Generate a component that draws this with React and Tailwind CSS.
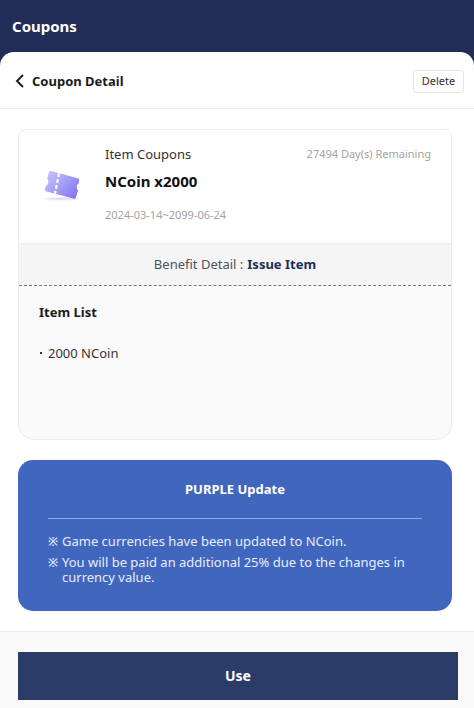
const notices = [
  'Game currencies have been updated to NCoin.',
  'You will be paid an additional 25% due to the changes in currency value.',
]

const items = ['2000 NCoin']

function TicketIcon() {
  return (
    <svg viewBox="0 0 40 34" className="h-[34px] w-10" fill="none" aria-hidden="true">
      <defs>
        <linearGradient id="ticket" x1="6" y1="4" x2="34" y2="30" gradientUnits="userSpaceOnUse">
          <stop stopColor="#c3c1fb" />
          <stop offset="0.5" stopColor="#a19df6" />
          <stop offset="1" stopColor="#8870ee" />
        </linearGradient>
        <radialGradient id="shade">
          <stop stopColor="#dcd9fb" />
          <stop offset="1" stopColor="#f1effe" />
        </radialGradient>
      </defs>
      <ellipse cx="19.500" cy="29.700" rx="18" ry="1.800" fill="url(#shade)" />
      <path
        d="M6.800 3.400Q7.300 1.600 9.200 2.100L35.600 9.200Q37.600 9.800 37.200 11.700L36.600 14.500C34.500 15.800 34 19 36 21.300L34 28.200Q33.400 30.200 31.200 29.600L4.600 22.600Q2.600 22 3 20.200L3.700 17.300C6.500 15.700 7.100 12 5.200 9.600Z"
        fill="url(#ticket)"
      />
      <path d="M17 4.400 13 24.800" stroke="#fff" strokeWidth="2.200" strokeDasharray="3.800 2.100" />
    </svg>
  )
}

function Header() {
  return (
    <header className="flex h-[52px] items-center px-3">
      <h1 className="text-[15px] font-bold text-white">Coupons</h1>
    </header>
  )
}

function DetailBar() {
  return (
    <div className="flex h-[57px] items-center justify-between border-b border-[#ececec] pt-0.5 pr-2.5 pl-3.5">
      <button type="button" className="flex items-center gap-1.5 pt-px text-[13px] font-bold text-[#1a1a1a]">
        <svg viewBox="0 0 12 14" className="-mt-0.5 h-3.5 w-3" fill="none" aria-hidden="true">
          <path d="M9 1 3 7l6 6" stroke="currentColor" strokeWidth="1.9" />
        </svg>
        Coupon Detail
      </button>
      <button
        type="button"
        className="h-[23px] w-[51px] rounded-[3px] border border-[#e5e5e5] pb-0.5 text-[11px] leading-[19px] text-[#333]"
      >
        Delete
      </button>
    </div>
  )
}

function CouponCard() {
  return (
    <section className="h-[311px] overflow-hidden rounded-t-lg rounded-b-2xl border border-[#ececec] bg-[#fafafa]">
      <div className="flex h-[114px] border-b border-[#ececec] bg-white pr-5 pl-[23px]">
        <div className="mt-[39px] w-[63px] shrink-0">
          <TicketIcon />
        </div>
        <div className="flex-1 pt-3.5">
          <div className="flex items-center justify-between leading-5">
            <span className="text-[13px] text-[#333]">Item Coupons</span>
            <span className="text-[11px] text-[#a3a3a3]">27494 Day(s) Remaining</span>
          </div>
          <h2 className="mt-[7px] text-[15px] leading-5 font-bold text-[#111]">NCoin x2000</h2>
          <p className="mt-3.5 text-[11px] leading-5 text-[#a3a3a3]">2024-03-14~2099-06-24</p>
        </div>
      </div>
      <div className="flex h-[41px] items-center justify-center gap-1 bg-[#f5f5f5] text-[13px] text-[#4c5260]">
        Benefit Detail : <strong className="font-bold text-[#212b58]">Issue Item</strong>
      </div>
      <div className="border-t border-dashed border-[#777] px-5 pt-4">
        <h3 className="text-[13px] leading-5 font-bold text-[#1a1a1a]">Item List</h3>
        <ul className="mt-[21px] text-[13px] leading-5 text-[#333]">
          {items.map((item) => (
            <li key={item} className="flex items-center">
              <span className="mr-[6px] ml-px size-0.5 bg-[#333]" />
              {item}
            </li>
          ))}
        </ul>
      </div>
    </section>
  )
}

function UpdateNotice() {
  return (
    <section className="mt-5 h-[151px] rounded-[15px] bg-[#4166bd] px-[30px] pt-5">
      <h3 className="border-b border-[#91a8df] pb-[19px] text-center text-[13px] leading-[19px] font-bold text-white">
        PURPLE Update
      </h3>
      <ul className="mt-[15px] space-y-[6px] text-[13px] leading-[15px] text-[#e6edff]">
        {notices.map((notice) => (
          <li key={notice} className="flex">
            <span className="w-3.5 shrink-0 text-xs leading-[15px] font-medium">※</span>
            <span>{notice}</span>
          </li>
        ))}
      </ul>
    </section>
  )
}

export default function App() {
  return (
    <div className="h-[708px] overflow-hidden bg-[#212c57] font-['Noto_Sans','Noto_Sans_CJK_KR',sans-serif]">
      <Header />
      <main className="flex h-[656px] flex-col rounded-t-[14px] bg-white">
        <DetailBar />
        <div className="pt-5 pr-[22px] pl-[18px]">
          <CouponCard />
          <UpdateNotice />
        </div>
        <footer className="mt-5 flex-1 border-t border-[#ececec] bg-[#fafafa] pt-5 pr-4 pl-[18px]">
          <button type="button" className="h-12 w-full bg-[#2b3c68] text-sm font-bold text-white">
            Use
          </button>
        </footer>
      </main>
    </div>
  )
}
